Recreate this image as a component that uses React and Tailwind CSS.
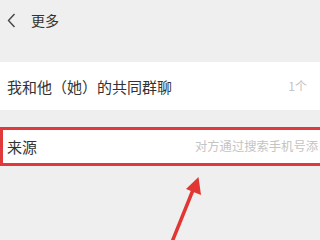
export default function App() {
  return (
    <div
      className="relative w-[320px] h-[240px] overflow-hidden bg-[#efefef]"
      style={{ fontFamily: '"Noto Sans CJK SC", "Noto Sans", sans-serif' }}
    >
      <div className="h-[62px]">
        <div className="flex items-center h-[40px] pl-[7px]">
          <svg width="9" height="15" viewBox="0 0 9 15">
            <path d="M7.5 1 L1.5 7.5 L7.5 14" fill="none" stroke="#444" strokeWidth="1.4" />
          </svg>
          <span className="ml-[15px] text-[14px] leading-none text-[#333]">更多</span>
        </div>
      </div>
      <div className="flex items-center h-[48px] bg-white pl-[7px]">
        <span className="text-[15px] leading-none text-[#333] whitespace-nowrap">我和他（她）的共同群聊</span>
        <div className="ml-auto mr-[-8px] flex items-center">
          <span className="text-[12px] leading-none text-[#c4c4c4] whitespace-nowrap">1个</span>
          <svg width="8" height="13" viewBox="0 0 8 13" className="ml-[13px]">
            <path d="M1 1 L6.5 6.5 L1 12" fill="none" stroke="#cfcfcf" strokeWidth="1.3" />
          </svg>
        </div>
      </div>
      <div className="mt-[17px] w-[320px] h-[39px] bg-white border-[3px] border-r-0 border-[#e0393b] flex items-center justify-between pl-[4px] pr-[2px]">
        <span className="shrink-0 text-[15px] leading-none text-[#333] whitespace-nowrap">来源</span>
        <span className="shrink-0 text-[12.3px] leading-none text-[#c4c4c4] whitespace-nowrap">对方通过搜索手机号添</span>
      </div>
      <svg className="absolute left-0 top-0" width="320" height="240" viewBox="0 0 320 240">
        <line x1="172" y1="242" x2="193" y2="190" stroke="#e23633" strokeWidth="3.5" />
        <polygon points="198.5,177 201,195 186,189" fill="#e23633" />
      </svg>
    </div>
  );
}
